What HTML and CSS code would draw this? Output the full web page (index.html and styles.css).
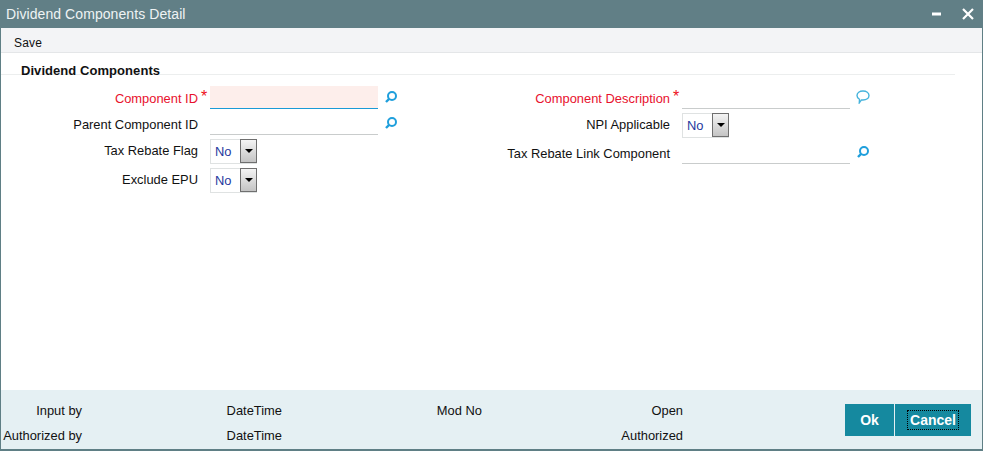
FILE: index.html
```html
<!DOCTYPE html>
<html lang="en">
<head>
<meta charset="utf-8">
<title>Dividend Components Detail</title>
<link rel="stylesheet" href="styles.css">
</head>
<body>
<div class="window">
  <header class="titlebar">
    <h1 class="title">Dividend Components Detail</h1>
    <div class="win-controls">
      <svg class="win-icon" width="9" height="10" viewBox="0 0 9 10"><rect x="0" y="3.500" width="9" height="3" fill="#fff"/></svg>
      <svg class="win-icon" width="12" height="12" viewBox="0 0 12 12"><path d="M1 1l10 10M11 1L1 11" stroke="#fff" stroke-width="2.2" fill="none"/></svg>
    </div>
  </header>
  <nav class="toolbar"><span class="save">Save</span></nav>
  <main class="content">
    <h2 class="section">Dividend Components</h2>
    <div class="form">
      <div class="col col-left">
        <div class="row row-a">
          <label class="label req">Component ID</label><span class="star">*</span>
          <div class="input input-req"></div>
          <svg class="icon" width="14" height="14" viewBox="0 0 14 14"><circle cx="8" cy="6" r="4" fill="none" stroke="#1f9fdc" stroke-width="2"/><path d="M5 9l-3 3" stroke="#1f9fdc" stroke-width="2.4"/></svg>
        </div>
        <div class="row row-b">
          <label class="label">Parent Component ID</label><span class="star"></span>
          <div class="input"></div>
          <svg class="icon" width="14" height="14" viewBox="0 0 14 14"><circle cx="8" cy="6" r="4" fill="none" stroke="#1f9fdc" stroke-width="2"/><path d="M5 9l-3 3" stroke="#1f9fdc" stroke-width="2.4"/></svg>
        </div>
        <div class="row row-c">
          <label class="label">Tax Rebate Flag</label><span class="star"></span>
          <div class="select"><span class="select-value">No</span><span class="select-btn"><span class="arrow"></span></span></div>
        </div>
        <div class="row row-c">
          <label class="label">Exclude EPU</label><span class="star"></span>
          <div class="select"><span class="select-value">No</span><span class="select-btn"><span class="arrow"></span></span></div>
        </div>
      </div>
      <div class="col col-right">
        <div class="row row-a">
          <label class="label req">Component Description</label><span class="star">*</span>
          <div class="input"></div>
          <svg class="icon" width="14" height="14" viewBox="0 0 14 14"><path d="M7 1c3.400 0 6 1.900 6 4.500S10.400 10 7 10c-.5 0-1 0-1.500-.1L3.300 12.800l.2-3.500C1.900 8.500 1 7.100 1 5.500 1 2.900 3.600 1 7 1z" fill="none" stroke="#45b3dc" stroke-width="1.400"/></svg>
        </div>
        <div class="row row-d">
          <label class="label">NPI Applicable</label><span class="star"></span>
          <div class="select"><span class="select-value">No</span><span class="select-btn"><span class="arrow"></span></span></div>
        </div>
        <div class="row row-e">
          <label class="label">Tax Rebate Link Component</label><span class="star"></span>
          <div class="input"></div>
          <svg class="icon" width="14" height="14" viewBox="0 0 14 14"><circle cx="8" cy="6" r="4" fill="none" stroke="#1f9fdc" stroke-width="2"/><path d="M5 9l-3 3" stroke="#1f9fdc" stroke-width="2.4"/></svg>
        </div>
      </div>
    </div>
  </main>
  <footer class="footer">
    <div class="audit">
      <span class="a1">Input by</span><span class="a2">DateTime</span><span class="a3">Mod No</span><span class="a4">Open</span>
      <span class="a1">Authorized by</span><span class="a2">DateTime</span><span class="a3"></span><span class="a4">Authorized</span>
    </div>
    <div class="buttons">
      <button class="btn btn-ok" type="button">Ok</button>
      <button class="btn btn-cancel" type="button"><span class="focus">Cancel</span></button>
    </div>
  </footer>
</div>
</body>
</html>
```

FILE: styles.css
```css
* { box-sizing: border-box; }
html, body { margin: 0; height: 100%; }
body {
  font-family: "Liberation Sans", Arial, sans-serif;
  font-size: 12px;
  color: #111;
  background: #fff;
  overflow: hidden;
}
.window {
  width: 983px;
  height: 451px;
  display: flex;
  flex-direction: column;
  border-left: 1px solid #5f7f85;
  border-right: 1px solid #5f7f85;
  border-bottom: 2px solid #5f7f85;
}
.titlebar {
  height: 28px;
  margin: 0 -1px;
  flex: none;
  background: #617f86;
  display: flex;
  align-items: center;
  justify-content: space-between;
  padding: 0 9px 0 6px;
}
.title {
  margin: 0;
  font-size: 14px;
  font-weight: normal;
  letter-spacing: 0.08px;
  color: #eef3f4;
}
.win-controls { display: flex; align-items: center; gap: 21px; }
.win-icon { display: block; }
.toolbar {
  height: 25px;
  flex: none;
  background: #f3f4f6;
  border-bottom: 1px solid #e4e6e8;
  padding: 8px 0 0 13px;
  line-height: 14px;
}
.save { color: #111; letter-spacing: 0.2px; }
.content { flex: 1; padding: 10px 27px 0 0; }
.section {
  margin: 0;
  padding: 0 0 0 20px;
  height: 12px;
  font-size: 13px;
  font-weight: bold;
  line-height: 15px;
  letter-spacing: 0.06px;
  color: #111;
  border-bottom: 1px solid #eceeee;
}
.form { display: flex; padding-top: 11px; }
.col { display: flex; flex-direction: column; flex: none; }
.col-left { width: 480px; }
.col-right { width: 475px; }
.row { display: flex; align-items: center; }
.row-a { height: 23px; }
.row-b { height: 22px; margin-top: 4px; }
.row-c { height: 25px; margin-top: 4px; }
.row-d { height: 25px; margin-top: 4px; }
.row-e { height: 22px; margin-top: 4px; }
.label { flex: none; text-align: right; line-height: 14px; font-size: 12.900px; }
.row-a .label, .row-e .label { padding-top: 2px; }
.row-b .label { padding-top: 1px; }
.row-c .label { margin-bottom: 1px; }
.row-d .label { padding-top: 1px; margin-bottom: 3px; }
.col-left .label { width: 197px; }
.col-right .label { width: 189px; }
.req { color: #e8112d; }
.star {
  flex: none;
  width: 12px;
  height: 100%;
  padding: 2px 0 0 3px;
  color: #ee1020;
  font-size: 16px;
  line-height: 18px;
}
.input {
  flex: none;
  width: 168px;
  height: 100%;
  border-bottom: 1px solid #c9cccc;
}
.input-req { background: #fdeeeb; border-bottom: 1px solid #1a9ad6; }
.icon { flex: none; margin: 0 0 2px 6px; display: block; }
.select {
  flex: none;
  width: 47px;
  height: 25px;
  display: flex;
  border: 1px solid #dfe2e2;
}
.select-value { flex: 1; padding: 5px 0 0 4px; color: #1f3a9e; line-height: 14px; font-size: 12.900px; }
.select-btn {
  width: 17px;
  height: 24px;
  margin: -1px -1px 0 0;
  border: 1px solid #6f6f6f;
  background: linear-gradient(#f4f4f4, #c4c4c4);
  display: flex;
  align-items: center;
  justify-content: center;
}
.arrow {
  width: 0;
  height: 0;
  border-left: 4px solid transparent;
  border-right: 4px solid transparent;
  border-top: 4px solid #000;
}
.footer {
  flex: none;
  height: 59px;
  background: #e5f0f3;
  display: flex;
  justify-content: space-between;
  font-size: 12.900px;
}
.audit {
  display: grid;
  grid-template-columns: 81px 200px 200px 201px;
  grid-auto-rows: 25px;
  padding-top: 8px;
  line-height: 25px;
}
.a1, .a2, .a3, .a4 { text-align: right; }
.buttons { display: flex; gap: 1px; padding: 14px 11px 0 0; }
.btn {
  height: 32px;
  border: 0;
  padding: 0;
  background: #15899f;
  color: #fff;
  font: bold 14px "Liberation Sans", Arial, sans-serif;
}
.btn-ok { width: 49px; }
.btn-cancel { width: 76px; }
.focus { outline: 1px dotted #000; padding: 1px 2px; }
```
